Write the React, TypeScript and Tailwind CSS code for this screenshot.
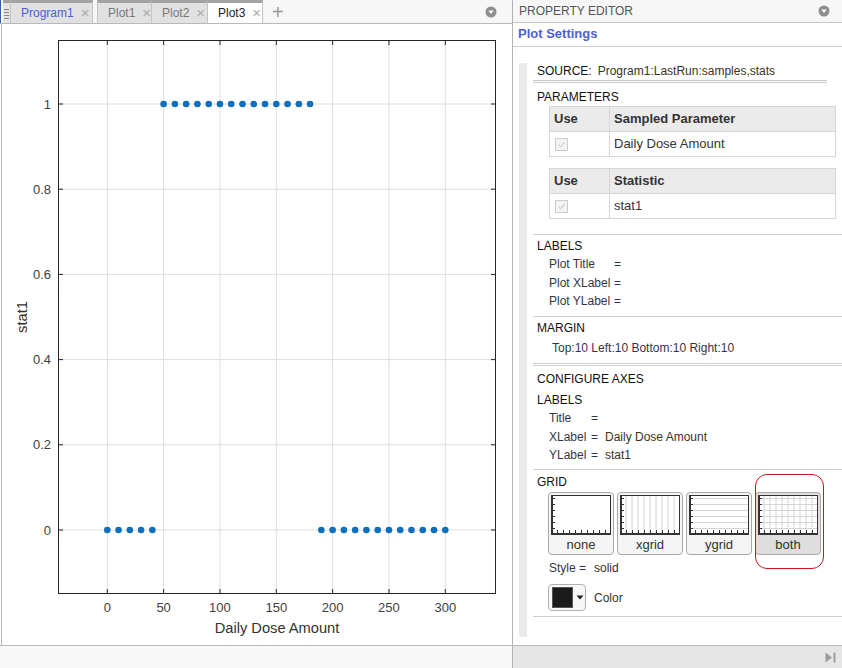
import React from "react";

const FONT = '"Liberation Sans", Arial, sans-serif';

const X0 = 107.3;
const SX = 1.12667;
const Y0 = 530;
const SY = 426;
const px = (v: number) => X0 + v * SX;
const py = (v: number) => Y0 - v * SY;
const BX1 = 58;
const BX2 = 496;
const BY1 = 40;
const BY2 = 594;

const xTicks = [0, 50, 100, 150, 200, 250, 300];
const yTicks = [0, 0.2, 0.4, 0.6, 0.8, 1];

const points: [number, number][] = [];
for (let v = 0; v <= 300; v += 10) {
  points.push([v, v >= 50 && v <= 180 ? 1 : 0]);
}

function CollapseIcon() {
  return (
    <svg width="12" height="12" viewBox="0 0 12 12">
      <circle cx="6" cy="6" r="5.5" fill="#8e8e8e" />
      <path d="M3.3 4.5 H8.7 L6 8 Z" fill="#fff" />
    </svg>
  );
}

function Chart() {
  return (
    <svg width="510" height="621" viewBox="2 24 510 621" className="block" style={{ fontFamily: FONT }}>
      <rect x={BX1} y={BY1} width={BX2 - BX1} height={BY2 - BY1} fill="#fff" />
      {xTicks.map((t) => (
        <line key={"gx" + t} x1={px(t)} x2={px(t)} y1={BY1} y2={BY2} stroke="#dedede" strokeWidth="1" />
      ))}
      {yTicks.map((t) => (
        <line key={"gy" + t} x1={BX1} x2={BX2} y1={py(t)} y2={py(t)} stroke="#dedede" strokeWidth="1" />
      ))}
      <rect x={BX1 + 0.5} y={BY1 + 0.5} width={BX2 - BX1 - 1} height={BY2 - BY1 - 1} fill="none" stroke="#262626" strokeWidth="1" />
      {xTicks.map((t) => (
        <g key={"tx" + t}>
          <line x1={px(t)} x2={px(t)} y1={BY2} y2={BY2 - 5} stroke="#262626" />
          <line x1={px(t)} x2={px(t)} y1={BY1} y2={BY1 + 5} stroke="#262626" />
          <text x={px(t)} y={612} fontSize="13" fill="#404040" textAnchor="middle">
            {t}
          </text>
        </g>
      ))}
      {yTicks.map((t) => (
        <g key={"ty" + t}>
          <line x1={BX1} x2={BX1 + 5} y1={py(t)} y2={py(t)} stroke="#262626" />
          <line x1={BX2} x2={BX2 - 5} y1={py(t)} y2={py(t)} stroke="#262626" />
          <text x={51} y={py(t) + 4.5} fontSize="13" fill="#404040" textAnchor="end">
            {t === 0 || t === 1 ? String(t) : t.toFixed(1)}
          </text>
        </g>
      ))}
      {points.map(([x, y]) => (
        <circle key={"p" + x} cx={px(x)} cy={py(y)} r="3.3" fill="#0f6fbf" />
      ))}
      <text x={277} y={633} fontSize="14.67" fill="#333" textAnchor="middle">
        Daily Dose Amount
      </text>
      <text x={27} y={317} fontSize="14.67" fill="#333" textAnchor="middle" transform="rotate(-90 27 317)">
        stat1
      </text>
    </svg>
  );
}

function Tab({ label, active, blue, w }: { label: string; active?: boolean; blue?: boolean; w: string }) {
  return (
    <div
      className={
        "h-full flex items-center pl-[10px] border-t-[3px] border-t-[#a3a3a3] border-r border-r-[#c4c4c4] " +
        w +
        (active ? " bg-white -mb-[1px] h-[24px]" : " bg-[#e1e1e1]")
      }
    >
      <span className={"text-[12px] leading-[14px] " + (blue ? "text-[#4d5fd0]" : active ? "text-[#222]" : "text-[#777]")}>{label}</span>
      <span className="ml-[7px] text-[15px] leading-[14px] text-[#a8a8a8]">×</span>
    </div>
  );
}

function Check() {
  return (
    <div className="w-[13px] h-[13px] border border-[#cdcdcd] bg-[#f3f3f3] flex items-center justify-center">
      <svg width="9" height="9" viewBox="0 0 9 9">
        <path d="M1.5 4.8 L3.6 6.8 L7.6 2" fill="none" stroke="#c4c4c4" strokeWidth="1" />
      </svg>
    </div>
  );
}

function Table({ head, value, cls }: { head: string; value: string; cls: string }) {
  return (
    <div className={"ml-[16px] mr-[6px] border border-[#d6d6d6] text-[13px] " + cls}>
      <div className="h-[25px] flex bg-[#ebebeb] border-b border-[#d6d6d6] font-bold text-[#333]">
        <div className="w-[60px] border-r border-[#d6d6d6] pl-[4px] flex items-center">Use</div>
        <div className="flex-1 pl-[4px] flex items-center">{head}</div>
      </div>
      <div className="h-[24px] flex bg-white text-[#333]">
        <div className="w-[60px] border-r border-[#d6d6d6] pl-[5px] flex items-center">
          <Check />
        </div>
        <div className="flex-1 pl-[4px] flex items-center">{value}</div>
      </div>
    </div>
  );
}

function GridIcon({ kind }: { kind: "none" | "xgrid" | "ygrid" | "both" }) {
  const xs = [6, 12, 18, 24, 30, 36, 42, 48, 54];
  const ys = [3, 9, 15, 21, 27, 33];
  const vx = kind === "xgrid" || kind === "both";
  const hy = kind === "ygrid" || kind === "both";
  return (
    <svg width="60" height="40" viewBox="0 0 60 40" className="block">
      <rect x="0" y="0" width="60" height="40" fill="#fff" />
      {vx && xs.map((x) => <line key={"v" + x} x1={x} x2={x} y1={1} y2={38} stroke="#d4d4d4" strokeWidth="1" />)}
      {hy && ys.map((y) => <line key={"h" + y} x1={1} x2={59} y1={y + 0.5} y2={y + 0.5} stroke="#d4d4d4" strokeWidth="1" />)}
      <rect x="0.5" y="0.5" width="59" height="38.5" fill="none" stroke="#333" strokeWidth="1" />
      <line x1="1" x2="1" y1="0" y2="40" stroke="#333" strokeWidth="2" />
      <line x1="0" x2="60" y1="39" y2="39" stroke="#333" strokeWidth="2" />
      {ys.map((y) => (
        <line key={"lt" + y} x1={1} x2={4} y1={y + 0.5} y2={y + 0.5} stroke="#333" strokeWidth="1" />
      ))}
      {xs.map((x) => (
        <line key={"bt" + x} x1={x + 0.5} x2={x + 0.5} y1={38} y2={35} stroke="#333" strokeWidth="1" />
      ))}
    </svg>
  );
}

function GridButton({ kind, selected }: { kind: "none" | "xgrid" | "ygrid" | "both"; selected?: boolean }) {
  return (
    <div className="relative">
      <div
        className={
          "w-[66px] h-[63px] rounded-[4px] border border-[#a9a9a9] pt-[2px] flex flex-col items-center " +
          (selected ? "bg-[#dedede]" : "bg-[#f5f5f5]")
        }
      >
        <GridIcon kind={kind} />
        <div className="flex-1 flex items-center text-[13px] text-[#333] leading-[14px]">{kind}</div>
      </div>
      {selected && (
        <div className="absolute left-[0px] -top-[18px] w-[69px] h-[95px] rounded-[12px] border border-[#c8181e]" />
      )}
    </div>
  );
}

export default function App() {
  return (
    <div className="w-[842px] h-[668px] flex bg-white overflow-hidden text-[#222]" style={{ fontFamily: FONT }}>
      {/* Left panel */}
      <div className="w-[512px] h-full flex flex-col">
        <div className="h-[24px] flex items-stretch bg-[#f7f7f7] border-b border-[#b9b9b9] relative">
          <div className="w-[1px] bg-[#2f5fa8]" />
          <div className="w-[2px]" />
          <div className="w-[8px] bg-[#e4e4e4] border-t-[3px] border-t-[#a3a3a3] border-r border-[#c4c4c4] flex flex-col items-center pt-[6px] gap-[2px]">
            <div className="w-[5px] h-[1px] bg-[#888]" />
            <div className="w-[5px] h-[1px] bg-[#888]" />
            <div className="w-[5px] h-[1px] bg-[#888]" />
            <div className="w-[5px] h-[1px] bg-[#888]" />
          </div>
          <Tab label="Program1" blue w="w-[82px]" />
          <div className="w-[4px]" />
          <Tab label="Plot1" w="w-[55px] border-l border-l-[#c4c4c4]" />
          <Tab label="Plot2" w="w-[56px]" />
          <Tab label="Plot3" active w="w-[55px]" />
          <div className="ml-[9px] flex items-center text-[20px] leading-[18px] text-[#999] font-light">+</div>
          <div className="absolute left-[485px] top-[6px]">
            <CollapseIcon />
          </div>
        </div>
        <div className="flex-1 bg-white border-l border-[#b9b9b9] ml-[1px] overflow-hidden">
          <Chart />
        </div>
        <div className="h-[23px] bg-[#f8f8f8] border-t border-[#b9b9b9]" />
      </div>

      {/* Right panel */}
      <div className="flex-1 h-full flex flex-col border-l border-[#b4b4b4]">
        <div className="h-[23px] bg-[#f7f7f7] border-b border-[#c8c8c8] flex items-center justify-between pl-[6px] pr-[12px]">
          <span className="text-[12px] text-[#555] leading-[14px]">PROPERTY EDITOR</span>
          <CollapseIcon />
        </div>
        <div className="h-[24px] border-b border-[#cfcfcf] flex items-start pt-[3px] pl-[5px]">
          <span className="text-[13px] font-bold text-[#4f60cc] leading-[15px]">Plot Settings</span>
        </div>
        <div className="flex-1 flex pt-[16px] pb-[8px] pl-[6px]">
          <div className="w-[8px] bg-[#ebebeb]" />
          <div className="flex-1 ml-[6px] text-[12px] text-[#2a2a2a] leading-[14px]">
            {/* source */}
            <div className="pt-[1px] pb-[2px] pl-[4px] mr-[15px] border-b-[3px] border-double border-[#c8c8c8]">
              <span className="text-[#111]">SOURCE:</span>
              <span className="ml-[6px] text-[#3a3326]">Program1:LastRun:samples,stats</span>
            </div>
            {/* parameters */}
            <div className="pt-[7px] pb-[15px]">
              <div className="pl-[4px] text-[#111]">PARAMETERS</div>
              <Table head="Sampled Parameter" value="Daily Dose Amount" cls="mt-[2px]" />
              <Table head="Statistic" value="stat1" cls="mt-[11px]" />
            </div>
            {/* labels */}
            <div className="border-t border-[#cfcfcf] pt-[4px] pb-[5.5px]">
              <div className="pl-[4px] text-[#111]">LABELS</div>
              <div className="mt-[2px] pl-[16px] text-[#30364a]">
                <div className="h-[18.5px] flex items-center">
                  <span className="w-[65px]">Plot Title</span>
                  <span>=</span>
                </div>
                <div className="h-[18.5px] flex items-center">
                  <span className="w-[65px]">Plot XLabel</span>
                  <span>=</span>
                </div>
                <div className="h-[18.5px] flex items-center">
                  <span className="w-[65px]">Plot YLabel</span>
                  <span>=</span>
                </div>
              </div>
            </div>
            {/* margin */}
            <div className="border-t border-[#cfcfcf] pt-[4px] pb-[8px] border-b-[3px] border-b-[#cfcfcf] border-double">
              <div className="pl-[4px] text-[#111]">MARGIN</div>
              <div className="mt-[6px] pl-[19px] text-[#30364a]">Top:10 Left:10 Bottom:10 Right:10</div>
            </div>
            {/* configure axes */}
            <div className="pt-[6px] pb-[4.5px]">
              <div className="pl-[4px] text-[#111]">CONFIGURE AXES</div>
              <div className="mt-[7px] pl-[4px] text-[#111]">LABELS</div>
              <div className="mt-[2px] pl-[16px] text-[#30364a]">
                <div className="h-[18.5px] flex items-center">
                  <span className="w-[42px]">Title</span>
                  <span className="w-[14px]">=</span>
                </div>
                <div className="h-[18.5px] flex items-center">
                  <span className="w-[42px]">XLabel</span>
                  <span className="w-[14px]">=</span>
                  <span className="text-[#3a3326]">Daily Dose Amount</span>
                </div>
                <div className="h-[18.5px] flex items-center">
                  <span className="w-[42px]">YLabel</span>
                  <span className="w-[14px]">=</span>
                  <span className="text-[#3a3326]">stat1</span>
                </div>
              </div>
            </div>
            {/* grid */}
            <div className="border-t border-[#cfcfcf] pt-[5px] pb-[5px] border-b border-b-[#cfcfcf]">
              <div className="pl-[4px] text-[#111]">GRID</div>
              <div className="mt-[3px] pl-[15px] flex gap-[3px]">
                <GridButton kind="none" />
                <GridButton kind="xgrid" />
                <GridButton kind="ygrid" />
                <GridButton kind="both" selected />
              </div>
              <div className="mt-[6px] pl-[16px] text-[#30364a]">
                <span>Style =</span>
                <span className="ml-[8px] text-[#3a3326]">solid</span>
              </div>
              <div className="mt-[9px] pl-[15px] flex items-center">
                <div className="w-[38px] h-[27px] rounded-[4px] border border-[#b0b0b0] bg-[#f7f7f7] flex items-center pl-[3px]">
                  <div className="w-[21px] h-[21px] bg-[#1b1b1b] border border-[#555]" />
                  <svg width="8" height="5" viewBox="0 0 8 5" className="ml-[3px]">
                    <path d="M0.5 0.5 H7.5 L4 4.5 Z" fill="#222" />
                  </svg>
                </div>
                <span className="ml-[8px] text-[#3a3326]">Color</span>
              </div>
            </div>
          </div>
        </div>
        <div className="h-[23px] bg-[#e6e6e6] border-t border-[#b9b9b9] flex items-center justify-end pr-[6px]">
          <svg width="11" height="11" viewBox="0 0 11 11">
            <path d="M0.5 0.5 L7 5.5 L0.5 10.5 Z" fill="#9c9c9c" />
            <rect x="8.5" y="0.5" width="2" height="10" fill="#9c9c9c" />
          </svg>
        </div>
      </div>
    </div>
  );
}
